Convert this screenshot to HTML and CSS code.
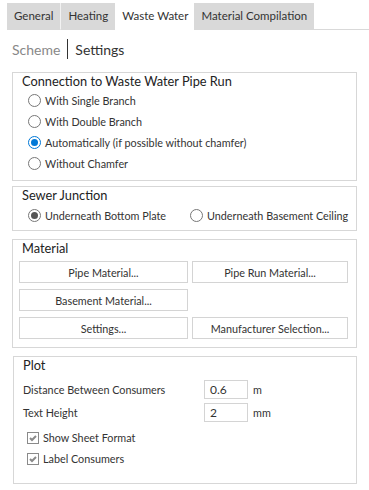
FILE: index.html
```html
<!DOCTYPE html>
<html lang="en">
<head>
    <meta charset="UTF-8">
    <meta name="viewport" content="width=device-width, initial-scale=1.0">
    <title>Waste Water Settings</title>
    <link rel="stylesheet" href="styles.css">
</head>
<body>
    <div class="tabs">
        <div class="tab">General</div>
        <div class="tab sep">Heating</div>
        <div class="tab active">Waste Water</div>
        <div class="tab">Material Compilation</div>
        <div class="tab-fill"></div>
    </div>

    <div class="subnav">
        <span class="sub-item muted">Scheme</span>
        <span class="sub-bar"></span>
        <span class="sub-item">Settings</span>
    </div>

    <div class="group g-connection">
        <div class="group-title">Connection to Waste Water Pipe Run</div>
        <div class="opt"><span class="radio"></span>With Single Branch</div>
        <div class="opt"><span class="radio"></span>With Double Branch</div>
        <div class="opt"><span class="radio on"></span>Automatically (if possible without chamfer)</div>
        <div class="opt"><span class="radio"></span>Without Chamfer</div>
    </div>

    <div class="group g-sewer">
        <div class="group-title">Sewer Junction</div>
        <div class="opt-row">
            <div class="opt first"><span class="radio grey-on"></span>Underneath Bottom Plate</div>
            <div class="opt"><span class="radio"></span>Underneath Basement Ceiling</div>
        </div>
    </div>

    <div class="group g-material">
        <div class="group-title">Material</div>
        <div class="btn-grid">
            <button class="btn">Pipe Material...</button>
            <button class="btn">Pipe Run Material...</button>
            <button class="btn">Basement Material...</button>
            <span></span>
            <button class="btn">Settings...</button>
            <button class="btn">Manufacturer Selection...</button>
        </div>
    </div>

    <div class="group g-plot">
        <div class="group-title">Plot</div>
        <div class="field first">
            <span class="field-label">Distance Between Consumers</span>
            <span class="field-input">0.6</span>
            <span class="field-unit">m</span>
        </div>
        <div class="field">
            <span class="field-label">Text Height</span>
            <span class="field-input">2</span>
            <span class="field-unit">mm</span>
        </div>
        <div class="check first">
            <svg class="box" width="12" height="12" viewBox="0 0 12 12"><rect x="0.5" y="0.5" width="11" height="11" fill="#fff" stroke="#8a8a8a"/><polyline points="3,6 5,8 9,4" fill="none" stroke="#8a8a8a" stroke-width="2"/></svg>
            Show Sheet Format
        </div>
        <div class="check">
            <svg class="box" width="12" height="12" viewBox="0 0 12 12"><rect x="0.5" y="0.5" width="11" height="11" fill="#fff" stroke="#8a8a8a"/><polyline points="3,6 5,8 9,4" fill="none" stroke="#8a8a8a" stroke-width="2"/></svg>
            Label Consumers
        </div>
    </div>
</body>
</html>
```

FILE: styles.css
```css
body {
    margin: 0;
    background: #fff;
    font-family: Lato, "Open Sans", sans-serif;
    color: #333;
    width: 369px;
}

/* tab strip */
.tabs {
    display: flex;
    padding: 3px 0 0 7px;
    height: 27px;
}
.tab {
    background: #d9d9d9;
    font-size: 11.5px;
    line-height: 26px;
    padding: 0 7px;
    color: #333;
    border-bottom: 1px solid #d9d9d9;
    white-space: nowrap;
}
.tab.sep {
    border-left: 1px solid #f2f2f2;
}
.tab.active {
    background: #fff;
    border-bottom-color: #fff;
    padding: 0 6px 0 7px;
}
.tab-fill {
    flex: 1;
    border-bottom: 1px solid #d9d9d9;
}

.subnav {
    display: flex;
    align-items: center;
    padding: 7px 0 0 12px;
    height: 24px;
    font-size: 14px;
}
.sub-item.muted {
    color: #888;
}
.sub-bar {
    width: 1px;
    height: 20px;
    background: #333;
    margin: 0 7px;
}

/* group boxes */
.group {
    border: 1px solid #d7d7d7;
    margin-left: 12px;
    width: 343px;
}
.group-title {
    font-size: 12.8px;
    line-height: 17px;
    padding-left: 9px;
    color: #222;
}
.g-connection {
    margin-top: 11px;
    padding-bottom: 6px;
}
.g-sewer {
    margin-top: 5px;
    padding-bottom: 4px;
}
.g-material {
    margin-top: 8px;
    padding-bottom: 8px;
}
.g-plot {
    margin-top: 8px;
    margin-left: 13px;
    width: 342px;
    height: 126px;
}

.opt {
    display: flex;
    align-items: center;
    height: 21px;
    padding-left: 15px;
    font-size: 10.8px;
    white-space: nowrap;
}
.opt-row {
    display: flex;
    height: 22px;
}
.opt-row .opt {
    height: 22px;
}
.opt.first {
    width: 162px;
}
.opt-row .opt + .opt {
    padding-left: 0;
}
.radio {
    flex-shrink: 0;
    width: 11px;
    height: 11px;
    border: 1px solid #777;
    border-radius: 50%;
    margin-right: 4px;
    position: relative;
    background: #fff;
}
.radio.on {
    border-color: #0078d7;
}
.radio.on::after,
.radio.grey-on::after {
    content: "";
    position: absolute;
    left: 2px;
    top: 2px;
    width: 7px;
    height: 7px;
    border-radius: 50%;
    background: #0078d7;
}
.radio.grey-on::after {
    background: #555;
}

/* material buttons */
.btn-grid {
    display: grid;
    grid-template-columns: 169px 156px;
    column-gap: 4px;
    row-gap: 6px;
    padding: 4px 0 0 6px;
}
.btn {
    height: 22px;
    border: 1px solid #d4d4d4;
    background: #fff;
    font-family: inherit;
    font-size: 10.8px;
    color: #333;
    padding: 0;
}

/* plot fields */
.field {
    display: flex;
    align-items: center;
    height: 23px;
    font-size: 10.8px;
    padding-left: 9px;
}
.field.first {
    margin-top: 4px;
}
.field-label {
    width: 181px;
}
.field-input {
    width: 37px;
    height: 17px;
    border: 1px solid #d4d4d4;
    padding-left: 5px;
    font-size: 12px;
    line-height: 17px;
}
.field-unit {
    margin-left: 5px;
}
.check {
    display: flex;
    align-items: center;
    height: 21px;
    font-size: 10.8px;
    padding-left: 13px;
}
.check.first {
    margin-top: 3px;
}
.box {
    flex-shrink: 0;
    margin-right: 4px;
}
```
